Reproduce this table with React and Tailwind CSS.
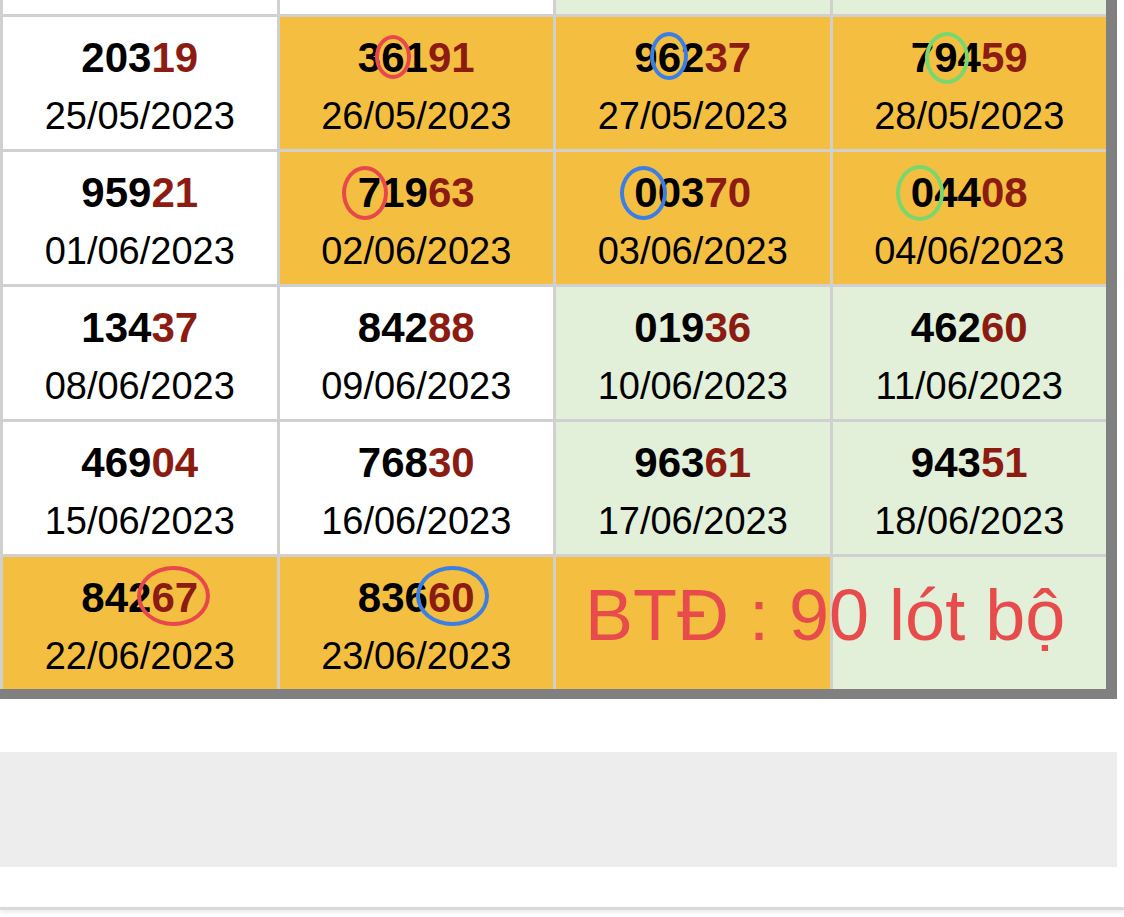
import React from "react";

const Y = "bg-[#f4bf41]";
const G = "bg-[#e2efd9]";
const W = "bg-white";

const ringColor = {
  red: "border-[#e8484b]",
  blue: "border-[#3b7ee6]",
  green: "border-[#7ad770]",
};

function Num({ value, ring }) {
  const chars = value.split("");
  const black = chars.slice(0, 3);
  const red = chars.slice(3);
  const render = (digits, offset, cls) => {
    const out = [];
    let i = 0;
    while (i < digits.length) {
      const idx = offset + i;
      if (ring && idx === ring.start) {
        const seg = value.slice(ring.start, ring.start + ring.len);
        out.push(
          <span key={idx} className={"relative " + cls}>
            {seg}
            <span
              className={
                "absolute top-1/2 left-1/2 rounded-[50%] border-[4px] pointer-events-none " +
                ringColor[ring.color]
              }
              style={{
                width: ring.w,
                height: ring.h,
                marginLeft: -ring.w / 2 + (ring.dx || 0),
                marginTop: -ring.h / 2 + (ring.dy || 0),
              }}
            />
          </span>
        );
        i += ring.len;
      } else {
        out.push(
          <span key={idx} className={cls}>
            {digits[i]}
          </span>
        );
        i += 1;
      }
    }
    return out;
  };
  return (
    <div className="text-[42px] leading-[55px] font-bold">
      {render(black, 0, "text-black")}
      {render(red, 3, "text-[#8c1b12]")}
    </div>
  );
}

function Cell({ bg, num, date, ring, children }) {
  return (
    <div className={"relative h-[132px] flex flex-col items-center pt-[13px] " + bg}>
      {num && <Num value={num} ring={ring} />}
      {date && <div className="text-[38px] leading-[62px] text-black">{date}</div>}
      {children}
    </div>
  );
}

export default function App() {
  return (
    <div
      className="w-[1124px] h-[917px] bg-white overflow-hidden"
      style={{ fontFamily: '"Liberation Sans", Arial, sans-serif' }}
    >
      <div className="w-[1117px] border-r-[11px] border-b-[10px] border-[#808080]">
        <div className="grid grid-cols-4 gap-[3px] pl-[3px] bg-[#d0d0d0]">
          <div className="h-[14px] bg-white" />
          <div className="h-[14px] bg-white" />
          <div className={"h-[14px] " + G} />
          <div className={"h-[14px] " + G} />

          <Cell bg={W} num="20319" date="25/05/2023" />
          <Cell bg={Y} num="36191" date="26/05/2023" ring={{ start: 1, len: 1, color: "red", w: 36, h: 44, dx: 0, dy: -1 }} />
          <Cell bg={Y} num="96237" date="27/05/2023" ring={{ start: 1, len: 1, color: "blue", w: 38, h: 48, dx: 0, dy: -2 }} />
          <Cell bg={Y} num="79459" date="28/05/2023" ring={{ start: 1, len: 1, color: "green", w: 44, h: 52, dx: 1, dy: 0 }} />

          <Cell bg={W} num="95921" date="01/06/2023" />
          <Cell bg={Y} num="71963" date="02/06/2023" ring={{ start: 0, len: 1, color: "red", w: 46, h: 54, dx: -5, dy: 0 }} />
          <Cell bg={Y} num="00370" date="03/06/2023" ring={{ start: 0, len: 1, color: "blue", w: 47, h: 54, dx: -3, dy: 0 }} />
          <Cell bg={Y} num="04408" date="04/06/2023" ring={{ start: 0, len: 1, color: "green", w: 48, h: 56, dx: -3, dy: 0 }} />

          <Cell bg={W} num="13437" date="08/06/2023" />
          <Cell bg={W} num="84288" date="09/06/2023" />
          <Cell bg={G} num="01936" date="10/06/2023" />
          <Cell bg={G} num="46260" date="11/06/2023" />

          <Cell bg={W} num="46904" date="15/06/2023" />
          <Cell bg={W} num="76830" date="16/06/2023" />
          <Cell bg={G} num="96361" date="17/06/2023" />
          <Cell bg={G} num="94351" date="18/06/2023" />

          <Cell bg={Y} num="84267" date="22/06/2023" ring={{ start: 3, len: 2, color: "red", w: 73, h: 60, dx: -1, dy: -2 }} />
          <Cell bg={Y} num="83660" date="23/06/2023" ring={{ start: 3, len: 2, color: "blue", w: 73, h: 60, dx: 1, dy: -2 }} />
          <Cell bg={Y}>
            <span className="absolute z-10 left-[29px] top-[22px] whitespace-nowrap text-[72px] leading-none text-[#e84b4b]">
              BTĐ : 90 lót bộ
            </span>
          </Cell>
          <Cell bg={G} />
        </div>
      </div>

      <div className="h-[53px]" />
      <div className="w-[1117px] h-[115px] bg-[#ededed]" />
      <div className="h-[40px]" />
      <div className="w-full h-[3px] bg-[#d9d9d9] shadow-[0_2px_4px_rgba(0,0,0,0.12)]" />
    </div>
  );
}
